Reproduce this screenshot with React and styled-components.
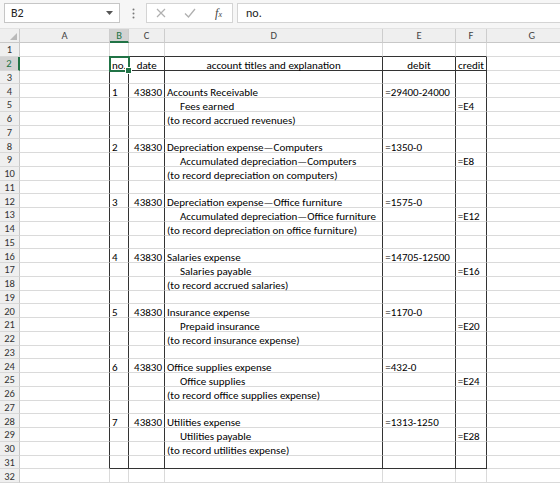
import React from 'react';
import styled, { createGlobalStyle } from 'styled-components';

const FONT = `"Carlito", "Lato", "Liberation Sans", sans-serif`;
const GRID = '#dadada';
const DARK = '#333333';
const GREEN = '#217346';

const Global = createGlobalStyle`
  html, body { margin: 0; padding: 0; background: #fff; }
  body { font-family: ${FONT}; overflow: hidden; }
`;

const Window = styled.div`
  width: 560px;
  height: 484px;
  overflow: hidden;
  display: flex;
  flex-direction: column;
  background: #fff;
`;

const Toolbar = styled.div`
  box-sizing: border-box;
  height: 29px;
  flex: none;
  display: flex;
  align-items: flex-start;
  padding: 3px 0 0 4px;
  background: #f6f6f6;
  border-bottom: 1px solid #e2e2e2;
`;

const NameBox = styled.div`
  box-sizing: border-box;
  width: 116px;
  height: 20px;
  background: #fff;
  border: 1px solid #c6c6c6;
  display: flex;
  align-items: center;
  justify-content: space-between;
  padding: 0 6px 0 6px;
  font-size: 12px;
  color: #222;
`;

const Dots = styled.div`
  width: 26px;
  height: 20px;
  display: flex;
  align-items: center;
  justify-content: center;
`;

const FxBox = styled.div`
  box-sizing: border-box;
  width: 87px;
  height: 20px;
  background: #fff;
  border: 1px solid #d4d4d4;
  display: grid;
  grid-template-columns: 28px 30px 27px;
  align-items: center;
  justify-items: center;
`;

const FxText = styled.span`
  font-family: "Liberation Serif", serif;
  font-style: italic;
  font-size: 12px;
  color: #444;
  & > small { font-size: 8px; }
`;

const FormulaInput = styled.div`
  box-sizing: border-box;
  margin-left: 4px;
  flex: 1;
  height: 20px;
  background: #fff;
  border: 1px solid #d4d4d4;
  border-right: none;
  display: flex;
  align-items: center;
  padding-left: 8px;
  font-size: 12px;
  color: #222;
`;

const Sheet = styled.div`
  display: grid;
  grid-template-columns: 20px 90px 19.3px 35.7px 218.3px 72.4px 31.6px 90px;
  grid-template-rows: 14px repeat(32, 13.75px);
`;

const Corner = styled.div`
  box-sizing: border-box;
  background: #efefef;
  border-right: 1px solid #c8c8c8;
  border-bottom: 1px solid #c8c8c8;
  display: flex;
  align-items: flex-end;
  justify-content: flex-end;
  padding: 0 2px 2px 0;
`;

const ColHead = styled.div`
  box-sizing: border-box;
  background: ${p => (p.$sel ? '#d2d2d2' : '#efefef')};
  border-right: 1px solid #cdcdcd;
  border-bottom: ${p => (p.$sel ? `2px solid ${GREEN}` : '1px solid #c8c8c8')};
  color: ${p => (p.$sel ? GREEN : '#444')};
  font-size: 10.5px;
  line-height: 10px;
  display: flex;
  align-items: center;
  justify-content: center;
  padding-top: ${p => (p.$sel ? '2px' : '1px')};
`;

const RowHead = styled.div`
  box-sizing: border-box;
  background: ${p => (p.$sel ? '#d2d2d2' : '#efefef')};
  border-right: ${p => (p.$sel ? `2px solid ${GREEN}` : '1px solid #c8c8c8')};
  border-bottom: 1px solid #d8d8d8;
  color: ${p => (p.$sel ? GREEN : '#333')};
  font-size: 10.5px;
  line-height: 10px;
  display: flex;
  align-items: center;
  justify-content: center;
  padding-top: 2px;
`;

const Cell = styled.div`
  box-sizing: border-box;
  position: relative;
  z-index: ${p => (p.$active ? 3 : p.$hasText ? 1 : 0)};
  border-right: 1px solid ${p => p.$rc};
  border-bottom: 1px solid ${p => p.$bc};
  font-size: 11px;
  line-height: 9px;
  color: #000;
  white-space: nowrap;
  display: flex;
  align-items: flex-end;
  justify-content: ${p =>
    p.$align === 'right' ? 'flex-end' : p.$align === 'center' ? 'center' : 'flex-start'};
  padding: 0 2px 0 ${p => 2 + (p.$indent || 0)}px;
  outline: ${p => (p.$active ? `2px solid ${GREEN}` : 'none')};
  outline-offset: -1px;
  &::after {
    content: '';
    display: ${p => (p.$active ? 'block' : 'none')};
    position: absolute;
    right: -4px;
    bottom: -4px;
    width: 5px;
    height: 5px;
    background: ${GREEN};
    border: 1px solid #fff;
  }
`;

const COLS = ['A', 'B', 'C', 'D', 'E', 'F', 'G'];

const entries = [
  ['1', 'Accounts Receivable', '=29400-24000', 'Fees earned', '(to record accrued revenues)'],
  ['2', 'Depreciation expense—Computers', '=1350-0', 'Accumulated depreciation—Computers', '(to record depreciation on computers)'],
  ['3', 'Depreciation expense—Office furniture', '=1575-0', 'Accumulated depreciation—Office furniture', '(to record depreciation on office furniture)'],
  ['4', 'Salaries expense', '=14705-12500', 'Salaries payable', '(to record accrued salaries)'],
  ['5', 'Insurance expense', '=1170-0', 'Prepaid insurance', '(to record insurance expense)'],
  ['6', 'Office supplies expense', '=432-0', 'Office supplies', '(to record office supplies expense)'],
  ['7', 'Utilities expense', '=1313-1250', 'Utilities payable', '(to record utilities expense)'],
];

function buildData() {
  const data = {};
  const put = (r, c, text, align = 'left', indent = 0) => {
    data[`${r}-${c}`] = { text, align, indent };
  };
  put(2, 1, 'no.', 'left');
  put(2, 2, 'date', 'center');
  put(2, 3, 'account titles and explanation', 'center');
  put(2, 4, 'debit', 'center');
  put(2, 5, 'credit', 'center');
  entries.forEach(([no, debitAcct, formula, creditAcct, expl], i) => {
    const r = 4 + i * 4;
    put(r, 1, no, 'left');
    put(r, 2, '43830', 'right');
    put(r, 3, debitAcct, 'left');
    put(r, 4, formula, 'left');
    put(r + 1, 3, creditAcct, 'left', 13);
    put(r + 1, 5, `=E${r}`, 'left');
    put(r + 2, 3, expl, 'left');
  });
  return data;
}

const DATA = buildData();

function borderColors(r, c) {
  const inRows = r >= 2 && r <= 31;
  const right = inRows && c <= 5 ? DARK : GRID;
  const bottom = c >= 1 && c <= 5 && (r === 1 || r === 2 || r === 31) ? DARK : GRID;
  return { right, bottom };
}

const CornerMark = () => (
  <svg width="7" height="7" viewBox="0 0 7 7">
    <polygon points="7,0 7,7 0,7" fill="#b9b9b9" />
  </svg>
);

const DropArrow = () => (
  <svg width="7" height="4" viewBox="0 0 7 4">
    <polygon points="0,0 7,0 3.5,4" fill="#555" />
  </svg>
);

const VDots = () => (
  <svg width="3" height="11" viewBox="0 0 3 11">
    <circle cx="1.5" cy="1.5" r="1" fill="#777" />
    <circle cx="1.5" cy="5.5" r="1" fill="#777" />
    <circle cx="1.5" cy="9.5" r="1" fill="#777" />
  </svg>
);

const Cross = () => (
  <svg width="10" height="10" viewBox="0 0 10 10">
    <path d="M1 1 L9 9 M9 1 L1 9" stroke="#b0b0b0" strokeWidth="1.2" fill="none" />
  </svg>
);

const Check = () => (
  <svg width="12" height="10" viewBox="0 0 12 10">
    <path d="M1 5.5 L4.5 9 L11 1" stroke="#b0b0b0" strokeWidth="1.3" fill="none" />
  </svg>
);

export default function App() {
  const cells = [];
  cells.push(
    <Corner key="corner">
      <CornerMark />
    </Corner>
  );
  COLS.forEach((l, c) => {
    cells.push(
      <ColHead key={`h-${l}`} $sel={c === 1}>
        {l}
      </ColHead>
    );
  });
  for (let r = 1; r <= 32; r++) {
    cells.push(
      <RowHead key={`r-${r}`} $sel={r === 2}>
        {r}
      </RowHead>
    );
    for (let c = 0; c < 7; c++) {
      const d = DATA[`${r}-${c}`];
      const { right, bottom } = borderColors(r, c);
      cells.push(
        <Cell
          key={`${r}-${c}`}
          $rc={right}
          $bc={bottom}
          $align={d ? d.align : 'left'}
          $indent={d ? d.indent : 0}
          $hasText={!!d}
          $active={r === 2 && c === 1}
        >
          {d ? d.text : null}
        </Cell>
      );
    }
  }

  return (
    <Window>
      <Global />
      <Toolbar>
        <NameBox>
          <span>B2</span>
          <DropArrow />
        </NameBox>
        <Dots>
          <VDots />
        </Dots>
        <FxBox>
          <Cross />
          <Check />
          <FxText>
            f<small>x</small>
          </FxText>
        </FxBox>
        <FormulaInput>no.</FormulaInput>
      </Toolbar>
      <Sheet>{cells}</Sheet>
    </Window>
  );
}
